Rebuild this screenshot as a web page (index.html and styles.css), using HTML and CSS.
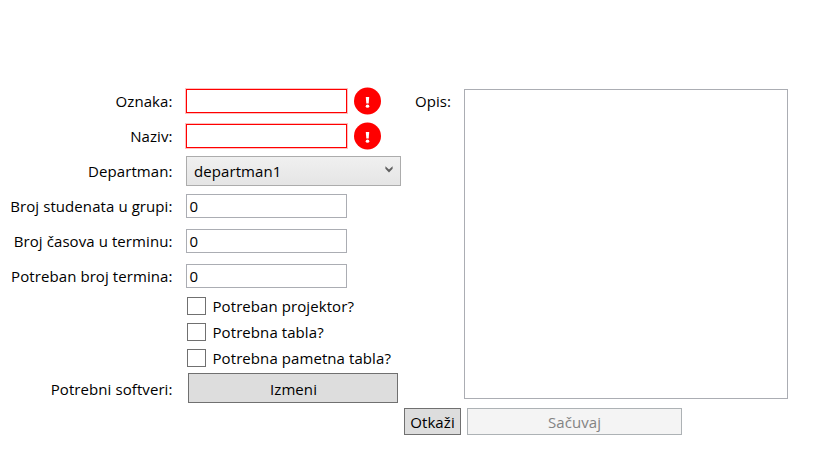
FILE: index.html
```html
<!DOCTYPE html>
<html lang="sr">
<head>
<meta charset="utf-8">
<title>Predmet</title>
<link rel="stylesheet" href="styles.css">
</head>
<body>
<form class="window">
  <div class="columns">
    <div class="fields">
      <div class="row"><label class="label">Oznaka:</label><div class="input invalid"></div><span class="error"><svg width="28" height="28" viewBox="0 0 28 28"><circle cx="13.5" cy="14" r="13.5" fill="#f00"/><path d="M11.8 10h3.4l-.5 6.6h-2.4z" fill="#fff"/><ellipse cx="13.5" cy="19.2" rx="1.8" ry="1.6" fill="#fff"/></svg></span></div>
      <div class="row"><label class="label">Naziv:</label><div class="input invalid"></div><span class="error"><svg width="28" height="28" viewBox="0 0 28 28"><circle cx="13.5" cy="14" r="13.5" fill="#f00"/><path d="M11.8 10h3.4l-.5 6.6h-2.4z" fill="#fff"/><ellipse cx="13.5" cy="19.2" rx="1.8" ry="1.6" fill="#fff"/></svg></span></div>
      <div class="row"><label class="label">Departman:</label><div class="combo"><span>departman1</span><svg width="8" height="7" viewBox="0 0 8 7"><path d="M0.4 0.2L4 3.5L7.6 0.2V2.8L4 6.5L0.4 2.8Z" fill="#606060"/></svg></div></div>
      <div class="row"><label class="label">Broj studenata u grupi:</label><div class="input">0</div></div>
      <div class="row"><label class="label">Broj časova u terminu:</label><div class="input">0</div></div>
      <div class="row"><label class="label">Potreban broj termina:</label><div class="input">0</div></div>
      <div class="checks">
        <label class="check"><i class="box"></i><span>Potreban projektor?</span></label>
        <label class="check"><i class="box"></i><span>Potrebna tabla?</span></label>
        <label class="check"><i class="box"></i><span>Potrebna pametna tabla?</span></label>
      </div>
      <div class="row last"><label class="label">Potrebni softveri:</label><button type="button" class="button edit">Izmeni</button></div>
    </div>
    <label class="opis">Opis:</label>
    <div class="textarea"></div>
  </div>
  <div class="actions">
    <button type="button" class="button cancel">Otkaži</button>
    <button type="button" class="button save" disabled>Sačuvaj</button>
  </div>
</form>
</body>
</html>
```
FILE: styles.css
```css
* { box-sizing: border-box; }
body {
  margin: 0;
  background: #fff;
  color: #000;
  font: 15px/20px "Open Sans", "Noto Sans", sans-serif;
  letter-spacing: 0.08px;
}
.window { width: 822px; height: 474px; padding-top: 84px; }
.columns { display: flex; align-items: flex-start; height: 324px; }
.fields { width: 415px; }
.row { display: flex; align-items: center; height: 35px; padding-bottom: 1px; }
.label { width: 172.5px; margin-right: 13.5px; text-align: right; white-space: nowrap; }
.input {
  width: 161px;
  height: 24px;
  padding: 1px 2.5px;
  border: 1px solid #abadb3;
  background: #fff;
}
.invalid { border-color: #f00; box-shadow: 0 0 0 1px #ff000040; }
.error { display: flex; margin-left: 7px; }
.combo {
  display: flex;
  align-items: center;
  justify-content: space-between;
  width: 215px;
  height: 30px;
  padding: 0 7px 0 7px;
  border: 1px solid #acacac;
  background: linear-gradient(#f0f0f0, #e5e5e5);
}
.combo svg { margin-top: -3px; }
.checks { padding: 0 0 0 187px; height: 78px; margin-top: -1px; }
.check { display: flex; align-items: center; height: 26px; }
.box { width: 19px; height: 18px; margin-right: 6.5px; border: 1px solid #707070; background: #fff; }
.opis { width: 49px; padding-top: 7px; }
.textarea { width: 324px; height: 310px; margin-top: 5px; border: 1px solid #abadb3; }
.button {
  padding: 0;
  border: 1px solid #707070;
  background: #ddd;
  color: #000;
  font: inherit;
  letter-spacing: inherit;
  text-align: center;
}
.edit { width: 210px; height: 30px; margin-left: 2px; padding: 1px 0 0 1px; }
.row.last .label { padding-top: 1px; }
.actions { display: flex; gap: 6px; padding-left: 404px; }
.cancel { width: 57px; height: 27px; }
.save { width: 215px; height: 27px; border-color: #adb2b5; background: #f4f4f4; color: #838383; }
```
